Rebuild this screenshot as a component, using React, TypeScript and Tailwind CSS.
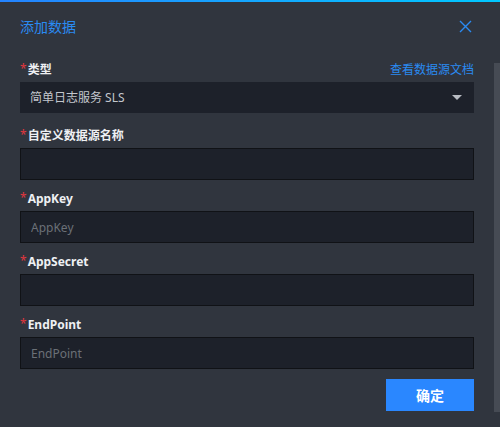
import { useState } from "react"

const fields = [
  { name: "自定义数据源名称", placeholder: "" },
  { name: "AppKey", placeholder: "AppKey" },
  { name: "AppSecret", placeholder: "" },
  { name: "EndPoint", placeholder: "EndPoint" },
]

const Label = ({ text, right }: { text: string; right?: React.ReactNode }) => (
  <div className="h-[20px] flex items-center justify-between">
    <div className="flex items-center">
      <span className="text-[#e0373f] text-[12px] leading-none mr-[1px] -mt-[3px]">*</span>
      <span className="text-[12px] font-bold text-[#eef0f3]">{text}</span>
    </div>
    {right}
  </div>
)

export default function App() {
  const [values, setValues] = useState<Record<string, string>>({})

  return (
    <div
      className="relative w-[500px] h-[427px] overflow-hidden bg-[#30353e]"
      style={{ fontFamily: '"Noto Sans", "Noto Sans CJK SC", sans-serif' }}
    >
      <div className="h-[2px] bg-gradient-to-r from-[#2483ff] to-[#00c8ff]" />

      <div className="h-[48px] flex items-center justify-between pl-5 pr-[28px]">
        <span className="text-[14px] text-[#2a8bf2]">添加数据</span>
        <svg width="13" height="13" viewBox="0 0 13 13" className="text-[#2a8bf2]">
          <path d="M1 1L12 12M12 1L1 12" stroke="currentColor" strokeWidth="1.4" fill="none" />
        </svg>
      </div>

      <div className="pl-5 pt-[10px] w-[474px] flex flex-col">
        <Label
          text="类型"
          right={<span className="text-[12px] text-[#2a8bf2]">查看数据源文档</span>}
        />
        <div className="mt-[2px] h-[31px] bg-[#1d212a] flex items-center justify-between pl-[10px] pr-[12px]">
          <span className="text-[12px] text-[#c3c7cd]">简单日志服务 SLS</span>
          <span className="w-0 h-0 border-l-[5px] border-r-[5px] border-t-[5px] border-l-transparent border-r-transparent border-t-[#b8bcc2]" />
        </div>

        {fields.map((f, i) => (
          <div key={f.name} className={`${i === 0 ? "mt-[13px]" : "mt-[9px]"} flex flex-col`}>
            <Label text={f.name} />
            <input
              className="mt-[2px] h-[32px] bg-[#1d212a] border border-[#101216] px-[10px] text-[12px] text-[#c3c7cd] placeholder:text-[#6b7077] outline-none"
              placeholder={f.placeholder}
              value={values[f.name] ?? ""}
              onChange={(e) => setValues((prev) => ({ ...prev, [f.name]: e.target.value }))}
            />
          </div>
        ))}

        <div className="flex justify-end mt-[10px]">
          <button className="w-[88px] h-[32px] bg-[#2a87ff] text-white text-[14px] font-bold">确定</button>
        </div>
      </div>

      <div className="absolute right-0 top-[63px] w-[6px] h-[349px] bg-[#464b54]" />
    </div>
  )
}
